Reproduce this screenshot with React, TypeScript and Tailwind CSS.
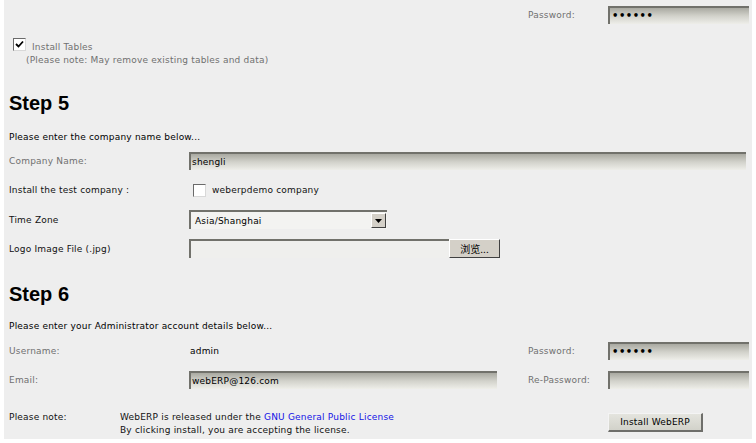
import React from "react";

const inputCls =
  "h-[18px] border-t-2 border-l-2 border-[#71716b] bg-linear-to-b from-[#a9a9a1] via-[#d2d2cb] to-[#eeeee9] flex items-center pl-px text-black";

function Dots() {
  return (
    <div className={`${inputCls} w-[141px]`}>
      <span className="text-[10px] leading-none tracking-[0.5px] pl-[1px] font-bold">••••••</span>
    </div>
  );
}

function Check({ checked }: { checked?: boolean }) {
  return (
    <div className="w-[13px] h-[13px] border border-t-[#6a6a6a] border-l-[#6a6a6a] border-b-[#d8d8d8] border-r-[#d8d8d8] bg-white flex items-center justify-center shrink-0">
      {checked && (
        <svg width="9" height="9" viewBox="0 0 9 9">
          <path d="M1 4 L3.5 6.5 L8 1.5" stroke="#000" strokeWidth="1.8" fill="none" />
        </svg>
      )}
    </div>
  );
}

export default function App() {
  return (
    <div className="w-[756px] h-[443px] bg-white overflow-hidden font-['DejaVu_Sans',sans-serif] text-[9px] leading-[12px] tracking-[0.2px] text-[#111]">
      <div className="ml-1 w-[748px] h-[439px] bg-[#eeeeee] pl-[5px] flex flex-col">
        {/* previous step: db password */}
        <div className="grid grid-cols-[180px_339px_80px_141px] items-center h-[18px] mt-[6px]">
          <div />
          <div />
          <div className="text-[#707070]">Password:</div>
          <Dots />
        </div>

        <div className="flex items-start mt-[14px] ml-[4px]">
          <Check checked />
          <span className="ml-[6px] mt-[3px] text-[#707070]">Install Tables</span>
        </div>
        <div className="ml-[17px] mt-px text-[#707070]">(Please note: May remove existing tables and data)</div>

        {/* Step 5 */}
        <h2 className="mt-[25px] font-['Liberation_Sans',Arial,sans-serif] font-bold text-[20px] leading-[24px] tracking-normal text-black">
          Step 5
        </h2>
        <p className="mt-[16px] text-black">Please enter the company name below...</p>

        <div className="grid grid-cols-[180px_557px] items-center h-[18px] mt-[9px]">
          <div className="text-[#707070]">Company Name:</div>
          <div className={inputCls}>shengli</div>
        </div>

        <div className="grid grid-cols-[180px_557px] items-center h-[18px] mt-[11px]">
          <div>Install the test company :</div>
          <div className="flex items-center ml-[4px]">
            <Check />
            <span className="ml-[6px]">weberpdemo company</span>
          </div>
        </div>

        <div className="grid grid-cols-[180px_557px] items-center h-[19px] mt-[11px]">
          <div>Time Zone</div>
          <div className="w-[198px] h-[19px] border-t-2 border-l-2 border-[#71716b] bg-[#f3f3f1] flex items-center justify-between">
            <span className="pl-[4px] text-black">Asia/Shanghai</span>
            <div className="w-[15px] h-[15px] mr-px bg-[#d4d0c8] border border-t-white border-l-white border-b-[#404040] border-r-[#404040] flex items-center justify-center">
              <svg width="7" height="4" viewBox="0 0 7 4">
                <path d="M0 0 H7 L3.5 4 Z" fill="#000" />
              </svg>
            </div>
          </div>
        </div>

        <div className="grid grid-cols-[180px_557px] items-center h-[19px] mt-[10px]">
          <div>Logo Image File (.jpg)</div>
          <div className="flex items-center">
            <div className="w-[260px] h-[19px] border-t-2 border-l-2 border-[#71716b] bg-[#efefed]" />
            <button className="w-[51px] h-[19px] bg-[#d4d0c8] border border-t-white border-l-white border-b-[#404040] border-r-[#404040] font-['Noto_Sans_CJK_SC',sans-serif] text-[10px] leading-none tracking-normal text-black">
              浏览...
            </button>
          </div>
        </div>

        {/* Step 6 */}
        <h2 className="mt-[24px] font-['Liberation_Sans',Arial,sans-serif] font-bold text-[20px] leading-[24px] tracking-normal text-black">
          Step 6
        </h2>
        <p className="mt-[14px] text-black">Please enter your Administrator account details below...</p>

        <div className="grid grid-cols-[180px_339px_80px_141px] items-center h-[18px] mt-[10px]">
          <div className="text-[#707070]">Username:</div>
          <div className="pl-px text-black">admin</div>
          <div className="text-[#707070]">Password:</div>
          <Dots />
        </div>

        <div className="grid grid-cols-[180px_339px_80px_141px] items-center h-[18px] mt-[11px]">
          <div className="text-[#707070]">Email:</div>
          <div className={`${inputCls} w-[308px]`}>webERP@126.com</div>
          <div className="text-[#707070]">Re-Password:</div>
          <div className={`${inputCls} w-[141px]`} />
        </div>

        <div className="flex items-start mt-[22px]">
          <div className="w-[111px]">Please note:</div>
          <div className="w-[488px] leading-[13px]">
            <div>
              WebERP is released under the <a className="text-[#1414e6]">GNU General Public License</a>
            </div>
            <div>By clicking install, you are accepting the license.</div>
          </div>
          <button className="mt-[2px] w-[95px] h-[19px] bg-linear-to-b from-[#e4e4de] to-[#d2d2ca] border border-t-[#f4f4f4] border-l-[#f4f4f4] border-b-2 border-r-2 border-b-[#6e6e6a] border-r-[#6e6e6a] text-[9px] leading-none text-black">
            Install WebERP
          </button>
        </div>
      </div>
    </div>
  );
}
